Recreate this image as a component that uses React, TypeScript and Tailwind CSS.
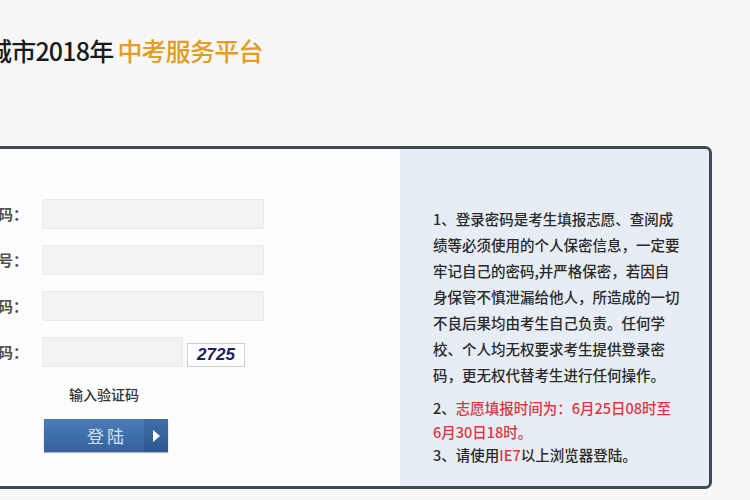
import React from 'react'

const font = { fontFamily: '"Noto Sans CJK SC", "Noto Sans", sans-serif' }

const Field: React.FC<{ label: string; children: React.ReactNode }> = ({ label, children }) => (
  <div className="flex items-center h-[30px]">
    <div className="w-[100px] ml-[-72px] text-right text-[15px] font-bold text-[#505050] whitespace-nowrap">
      {label}
    </div>
    <div className="ml-[14px] flex items-center">{children}</div>
  </div>
)

const App: React.FC = () => {
  return (
    <div className="w-[750px] h-[500px] bg-[#f7f7f7] overflow-hidden" style={font}>
      {/* Header */}
      <div className="h-[146px] pt-[33px]">
        <h1 className="ml-[-13px] text-[25px] leading-[34px] font-medium tracking-[-0.8px]">
          <span className="text-[#1a1a1a]">城市2018年</span>
          <span className="ml-[4px] text-[#e59c22]">中考服务平台</span>
        </h1>
      </div>

      {/* Login panel */}
      <div className="flex w-[712px] h-[343px] border-t-[3px] border-b-[3px] border-r-[3px] border-[#3d4b57] rounded-r-[7px] overflow-hidden">
        {/* Form */}
        <div className="w-[400px] bg-[#fdfdfd] pt-[50px]">
          <div className="flex flex-col gap-[16px]">
            <Field label="证件号码：">
              <div className="w-[222px] h-[30px] bg-[#f3f3f3] border border-[#ebebeb]" />
            </Field>
            <Field label="准考证号：">
              <div className="w-[222px] h-[30px] bg-[#f3f3f3] border border-[#ebebeb]" />
            </Field>
            <Field label="登录密码：">
              <div className="w-[222px] h-[30px] bg-[#f3f3f3] border border-[#ebebeb]" />
            </Field>
            <Field label="验证码：">
              <div className="w-[141px] h-[30px] bg-[#f3f3f3] border border-[#ebebeb]" />
              <div className="ml-[4px] mt-[5px] w-[58px] h-[24px] bg-white border border-[#cfcfcf] flex items-center justify-center">
                <span
                  className="text-[17px] font-bold italic text-[#23205c] leading-none"
                  style={{ fontFamily: '"Liberation Sans", sans-serif' }}
                >
                  2725
                </span>
              </div>
            </Field>
          </div>
          <div className="ml-[69px] mt-[17px] text-[14px] font-medium text-[#333] leading-[20px]">输入验证码</div>
          <button className="ml-[44px] mt-[15px] w-[124px] h-[33px] flex bg-gradient-to-b from-[#4a7cb6] to-[#3562a0] shadow-[0_1px_1px_rgba(0,0,0,0.3)]">
            <span className="flex-1 flex items-center justify-center pl-[26px] text-[17px] text-[#d3e2f2] tracking-[3px]">
              登陆
            </span>
            <span className="w-[24px] h-full flex items-center justify-center bg-gradient-to-b from-[#3f6ea8] to-[#2d5890]">
              <svg width="8" height="12" viewBox="0 0 8 12">
                <path d="M1 0 L8 6 L1 12 Z" fill="#ffffff" />
              </svg>
            </span>
          </button>
        </div>

        {/* Notice */}
        <div className="flex-1 bg-[#e6edf5] pl-[33px] pt-[57px] text-[14.5px] font-medium text-[#2a2a2a]">
          <p className="leading-[26px] whitespace-nowrap">
            1、登录密码是考生填报志愿、查阅成<br />
            绩等必须使用的个人保密信息，一定要<br />
            牢记自己的密码,并严格保密，若因自<br />
            身保管不慎泄漏给他人，所造成的一切<br />
            不良后果均由考生自己负责。任何学<br />
            校、个人均无权要求考生提供登录密<br />
            码，更无权代替考生进行任何操作。
          </p>
          <p className="mt-[8px] leading-[24px] whitespace-nowrap">
            2、<span className="text-[#e2343e]">志愿填报时间为：6月25日08时至</span><br />
            <span className="text-[#e2343e]">6月30日18时。</span>
          </p>
          <p className="leading-[22px] whitespace-nowrap">
            3、请使用<span className="text-[#e2343e]">IE7</span>以上浏览器登陆。
          </p>
        </div>
      </div>
    </div>
  )
}

export default App
